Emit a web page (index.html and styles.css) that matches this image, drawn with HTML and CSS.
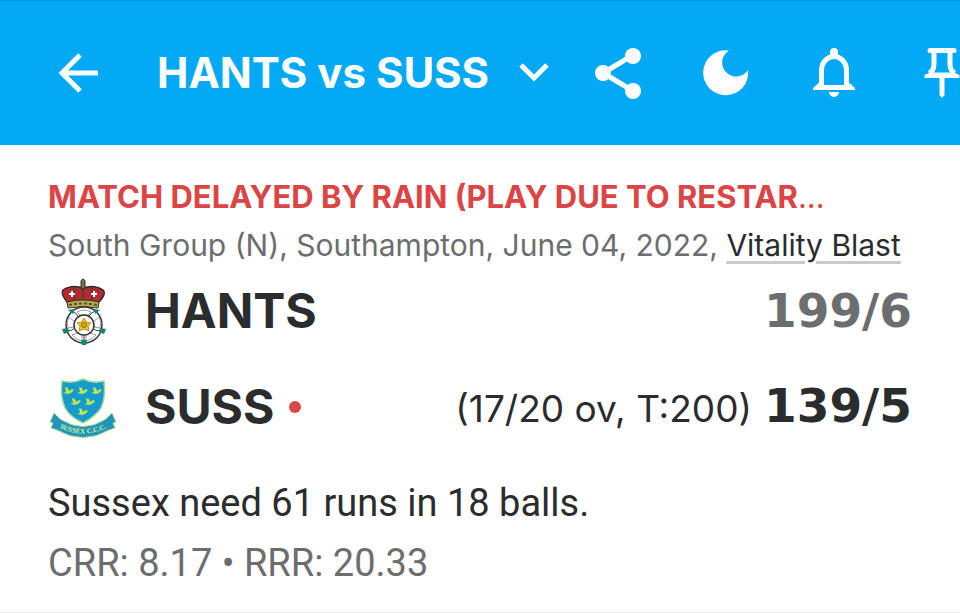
FILE: index.html
```html
<!DOCTYPE html>
<html lang="en">
<head>
<meta charset="utf-8">
<meta name="viewport" content="width=device-width, initial-scale=1">
<title>HANTS vs SUSS</title>
<link rel="stylesheet" href="styles.css">
</head>
<body>
<header class="bar">
  <button class="back" aria-label="Back">
    <svg width="40" height="40" viewBox="0 0 40 40" fill="none" stroke="currentColor" stroke-width="5"><path d="M22 2 4 20l18 18M3 20h37"/></svg>
  </button>
  <button class="match-picker">
    <h1 class="title">HANTS vs SUSS</h1>
    <svg width="30" height="20" viewBox="0 0 30 20" fill="none" stroke="currentColor" stroke-width="5"><path d="m2 2 13 13L28 2"/></svg>
  </button>
  <nav class="actions" aria-label="Match actions">
    <button class="icon-button" aria-label="Share">
      <svg width="46" height="52" viewBox="0 0 46 52" fill="currentColor"><path d="M38 8 8 26l30 18" fill="none" stroke="currentColor" stroke-width="5"/><circle cx="8" cy="26" r="8"/><circle cx="38" cy="9" r="8"/><circle cx="38" cy="44" r="8"/></svg>
    </button>
    <button class="icon-button" aria-label="Dark mode">
      <svg width="46" height="46" viewBox="0 0 46 46" fill="currentColor"><path d="M26 0.500A22.500 22.500 0 1 0 45 20A14 14 0 1 1 26 0.500Z"/></svg>
    </button>
    <button class="icon-button" aria-label="Notifications">
      <svg width="42" height="50" viewBox="0 0 42 50" fill="none" stroke="currentColor" stroke-width="5"><path d="M8.500 36V22a12.500 13.500 0 0 1 25 0v14l4 3.500h-33z"/><path d="M17 9V4a4 4 0 0 1 8 0v5zM16 44h10a5 5 0 0 1-10 0z" fill="currentColor" stroke="none"/><path d="M1 42v-2l7-6h26l7 6v2z" fill="currentColor" stroke="none"/><path d="M11 28h20v9H11z" fill="#03a9f4" stroke="none"/></svg>
    </button>
    <button class="icon-button" aria-label="Pin match">
      <svg width="36" height="50" viewBox="0 0 36 50" fill="none" stroke="currentColor" stroke-width="5"><path d="M6 2.500h24" stroke-linecap="round"/><path d="M10 4v12q0 7-5 9M26 4v12q0 7 5 9"/><path d="M.500 30v-3L6 24.500h24l5.500 2.500v3z" fill="currentColor" stroke="none"/><path d="M15.500 30v17l2.500 3 2.500-3V30z" fill="currentColor" stroke="none"/></svg>
    </button>
  </nav>
</header>
<main class="match">
  <p class="status">MATCH DELAYED BY RAIN (PLAY DUE TO RESTAR<span class="more">...</span></p>
  <p class="venue">South Group (N), Southampton, June 04, 2022, <a class="series" href="#series">Vitality Blast</a></p>
  <section class="teams">
    <div class="team">
      <svg class="crest" viewBox="0 0 70 70" role="img" aria-label="Hampshire">
        <path d="M15 14Q24 8 35 12Q46 8 55 14Q59 18 50 27Q35 24 20 27Q12 18 15 14Z" fill="#b52a32" stroke="#332a20" stroke-width="1.500"/>
        <path d="M35 11v14M27 12q-3 6 0 13M43 12q3 6 0 13" stroke="#51452c" stroke-width="2" fill="none"/>
        <path d="M19 26q16-4 32 0l-1 6q-15-3-30 0z" fill="#c6a64a" stroke="#3c3022"/>
        <path d="M21 29q14-3 28 0" stroke="#22653f" stroke-width="2" stroke-dasharray="3 2" fill="none"/>
        <path d="M33 5q2-4 4 0v8h-4z" fill="#75704d" stroke="#332a20"/>
        <path d="M24 15v6m-3-3h6m19-3v6m-3-3h6" stroke="#fff" stroke-width="2"/>
        <circle cx="36" cy="49" r="18" fill="#fff" stroke="#34363a" stroke-width="1.500"/>
        <path d="M24 35q5 2 7 7M47 35q-5 2-7 7M18 55q6 0 9-3M53 55q-6 0-9-3M36 67v-9" fill="none" stroke="#34363a"/>
        <path d="M29 36q7-4 14 0l-3 3h-8zM21 41l6 5-1 5-6 1q-2-6 1-11M51 41l-6 5 1 5 6 1q2-6-1-11M24 59l6-2 4 3v5q-6-1-10-6M48 59l-6-2-4 3v5q6-1 10-6" fill="#fff" stroke="#999da0"/>
        <circle cx="36" cy="49" r="10" fill="#fff" stroke="#34363a" stroke-width="1.500"/>
        <path d="m36 42 2.500 4 4.500 1-3 3 1 5-5-2-5 2 1-5-3-3 4.500-1z" fill="#f2c51f" stroke="#b3941f"/>
        <circle cx="36" cy="49" r="2.500" fill="#e0a716" stroke="#81702a"/>
        <path d="m20 34 6-1-1 5zM52 34l-6-1 1 5zM14 53l6-1 1 4-5 2zM58 53l-6-1-1 4 5 2zM33 64h6l-1 5h-4z" fill="#16866b"/>
      </svg>
      <h2 class="name">HANTS</h2>
      <div class="score past"><strong class="runs">199/6</strong></div>
    </div>
    <div class="team">
      <svg class="crest" viewBox="0 0 70 70" role="img" aria-label="Sussex">
        <path d="m6 41 6 6q23 15 46 0l6-6 4 9-3 1 2 5-6 2q-26 15-52 0l-6-2 2-5-3-1z" fill="#2394b5" stroke="#a2dc9b"/>
        <path d="M14 9q11 3 21-2q10 5 21 2q2 16-3 27q-6 9-18 15Q22 45 17 36Q12 25 14 9Z" fill="#169bcd" stroke="#a2dc9b" stroke-width="1.500"/>
        <g fill="#bfe64e"><path id="bird" d="m17 15 3 1 1 3 3-2 2 1-3 3-3 1-5-1 3-1z"/><use href="#bird" x="14"/><use href="#bird" x="28"/><use href="#bird" x="7" y="11"/><use href="#bird" x="21" y="11"/><use href="#bird" x="14" y="21"/></g>
        <path id="ribbon" d="M6 53q29 17 58 0" fill="none"/>
        <text class="motto"><textPath href="#ribbon" startOffset="50%">SUSSEX C.C.C.</textPath></text>
      </svg>
      <h2 class="name">SUSS</h2>
      <span class="batting" role="img" aria-label="Batting"></span>
      <div class="score"><span class="overs">(17/20 ov, T:200)</span> <strong class="runs">139/5</strong></div>
    </div>
  </section>
  <p class="summary">Sussex need 61 runs in 18 balls.</p>
  <p class="rates">CRR: 8.17 • RRR: 20.33</p>
</main>
</body>
</html>
```
FILE: styles.css
```css
* { box-sizing: border-box; }

body {
  margin: 0;
  background: #fff;
  color: #2b2c2d;
  font-family: Inter, "Open Sans", sans-serif;
  overflow-x: hidden;
}

h1, h2, p { margin: 0; }

button {
  padding: 0;
  border: 0;
  background: none;
  color: inherit;
  font: inherit;
}

svg { display: block; flex: none; }

.bar {
  display: flex;
  align-items: center;
  height: 145px;
  padding-left: 58px;
  border-top: 1px solid #0795d6;
  background: #03a9f4;
  color: #fff;
  overflow: hidden;
}

.back {
  flex: none;
  margin-right: 59px;
}

.match-picker {
  display: flex;
  flex: none;
  align-items: center;
  gap: 30px;
}

.title {
  font-size: 42px;
  font-weight: 700;
  line-height: 60px;
  white-space: nowrap;
}

.actions {
  display: flex;
  flex: none;
  align-items: center;
  gap: 62px;
  margin-left: 46px;
}

.icon-button {
  display: flex;
  flex: none;
  justify-content: center;
  width: 46px;
}

.match {
  padding: 28px 48px 19px;
  border-bottom: 1px solid #e7e7e7;
}

.status, .venue {
  line-height: 48px;
  white-space: nowrap;
}

.status {
  color: #dc4545;
  font-size: 31px;
  font-weight: 700;
}

.more { font-weight: 400; }

.venue {
  color: #6c6d6f;
  font-size: 30px;
}

.series {
  color: #2b2c2d;
  text-decoration: underline #c8c9ca 3px;
  text-underline-offset: 5px;
}

.teams {
  display: flex;
  flex-direction: column;
  gap: 12px;
}

.team {
  display: flex;
  align-items: center;
  height: 84px;
}

.crest { width: 70px; height: 70px; }

.name {
  margin-left: 27px;
  font-size: 48px;
  font-weight: 700;
  line-height: 60px;
}

.batting {
  width: 12px;
  height: 12px;
  margin-left: 15px;
  border-radius: 50%;
  background: #dc4545;
}

.score {
  display: flex;
  align-items: baseline;
  gap: 12px;
  margin-left: auto;
  line-height: 60px;
}

.past { color: #6c6d6f; }

.runs {
  font-family: "DejaVu Sans", sans-serif;
  font-size: 47px;
}

.overs { font-size: 37px; }

.summary, .rates {
  font-family: Roboto, sans-serif;
  font-size: 38px;
  line-height: 60px;
}

.motto {
  fill: #d5f5a0;
  font: 700 7px "Liberation Serif", serif;
  text-anchor: middle;
}

.summary { margin-top: 24px; }
.rates { color: #6c6d6f; }
```
